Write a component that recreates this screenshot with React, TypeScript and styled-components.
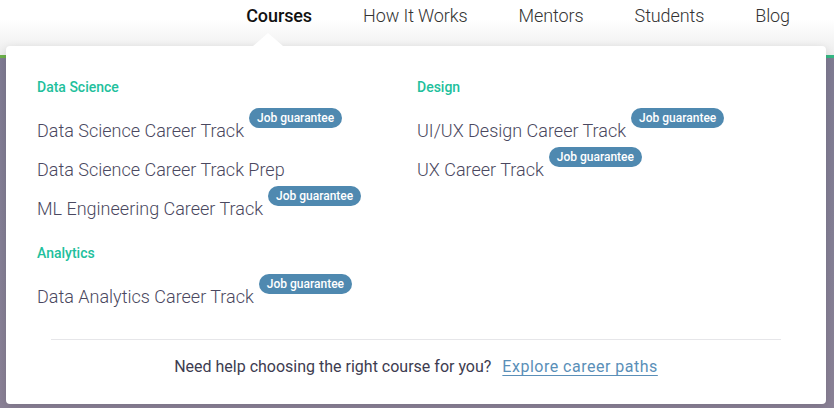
import React from 'react';
import styled, { createGlobalStyle } from 'styled-components';

const GlobalStyle = createGlobalStyle`
    html, body {
        margin: 0;
        padding: 0;
    }
    body {
        font-family: Roboto, "Liberation Sans", sans-serif;
        -webkit-font-smoothing: antialiased;
    }
`;

const StyledPage = styled.div`
    background: linear-gradient(180deg, #7e7a92 0%, #847f95 60%, #8a8196 100%);
    height: 408px;
    overflow: hidden;
    position: relative;
    width: 834px;
`;

const StyledHeader = styled.header`
    background: linear-gradient(180deg, #ffffff 0px, #ffffff 20px, #ededed 55px);
    box-sizing: border-box;
    display: flex;
    gap: 51px;
    height: 55px;
    justify-content: flex-end;
    padding-right: 44px;
`;

const StyledNavItem = styled.a<{ $active?: boolean }>`
    color: ${props => props.$active ? '#111111' : '#333333'};
    font-size: 18px;
    font-weight: ${props => props.$active ? 500 : 300};
    letter-spacing: -0.1px;
    line-height: 32px;
    text-decoration: none;
`;

const StyledStripe = styled.div`
    background: linear-gradient(90deg, #6cb04a 0%, #4fb56a 60%, #35b884 100%);
    height: 3px;
`;

const StyledDropdown = styled.div`
    background: #ffffff;
    border-radius: 4px;
    box-shadow: 0 2px 10px rgba(0, 0, 0, 0.12);
    box-sizing: border-box;
    height: 358px;
    left: 6px;
    padding: 31px 31px 0 31px;
    position: absolute;
    top: 46px;
    width: 820px;

    &::before {
        border-bottom: 13px solid #ffffff;
        border-left: 15px solid transparent;
        border-right: 15px solid transparent;
        content: '';
        left: 247px;
        position: absolute;
        top: -13px;
    }
`;

const StyledColumns = styled.div`
    display: grid;
    grid-template-columns: 380px 1fr;
`;

const StyledColumn = styled.div`
    display: flex;
    flex-direction: column;
`;

const StyledGroupTitle = styled.h4<{ $spaced?: boolean }>`
    color: #22bf9c;
    font-size: 14px;
    font-weight: 500;
    line-height: 20px;
    margin: ${props => props.$spaced ? '15px' : '0'} 0 14px 0;
`;

const StyledCourse = styled.a`
    align-items: flex-start;
    color: #4a4860;
    display: flex;
    font-size: 18px;
    font-weight: 300;
    height: 39px;
    line-height: 39px;
    text-decoration: none;
`;

const StyledBadge = styled.span`
    background: #4f89b0;
    border-radius: 10px;
    color: #ffffff;
    font-size: 12px;
    font-weight: 500;
    height: 20px;
    line-height: 20px;
    margin: -3px 0 0 5px;
    padding: 0 8px;
    white-space: nowrap;
`;

const StyledDivider = styled.hr`
    border: none;
    border-top: 1px solid #e6e6e9;
    margin: 23px 14px 0 14px;
`;

const StyledFooter = styled.p`
    color: #3d3c50;
    font-size: 16px;
    line-height: 20px;
    margin: 17px 0 0 0;
    text-align: center;
`;

const StyledLink = styled.a`
    color: #5a8fb8;
    letter-spacing: 0.5px;
    margin-left: 11px;
    text-decoration: underline;
    text-underline-offset: 3px;
`;

type Course = {
    title: string,
    guarantee?: boolean
};

type Group = {
    name: string,
    courses: Course[]
};

const LEFT_GROUPS: Group[] = [
    {
        name: 'Data Science',
        courses: [
            { title: 'Data Science Career Track', guarantee: true },
            { title: 'Data Science Career Track Prep' },
            { title: 'ML Engineering Career Track', guarantee: true },
        ]
    },
    {
        name: 'Analytics',
        courses: [
            { title: 'Data Analytics Career Track', guarantee: true },
        ]
    }
];

const RIGHT_GROUPS: Group[] = [
    {
        name: 'Design',
        courses: [
            { title: 'UI/UX Design Career Track', guarantee: true },
            { title: 'UX Career Track', guarantee: true },
        ]
    }
];

const NAV = ['Courses', 'How It Works', 'Mentors', 'Students', 'Blog'];

function CourseColumn({ groups }: { groups: Group[] }) {
    return <StyledColumn>
        {groups.map((group, i) =>
            <React.Fragment key={group.name}>
                <StyledGroupTitle $spaced={i > 0}>{group.name}</StyledGroupTitle>
                {group.courses.map(course =>
                    <StyledCourse key={course.title} href="#">
                        {course.title}
                        {course.guarantee && <StyledBadge>Job guarantee</StyledBadge>}
                    </StyledCourse>
                )}
            </React.Fragment>
        )}
    </StyledColumn>
}

export default function App() {
    return <>
        <GlobalStyle />
        <StyledPage>
            <StyledHeader>
                {NAV.map(item =>
                    <StyledNavItem key={item} href="#" $active={item === 'Courses'}>{item}</StyledNavItem>
                )}
            </StyledHeader>
            <StyledStripe />

            <StyledDropdown>
                <StyledColumns>
                    <CourseColumn groups={LEFT_GROUPS} />
                    <CourseColumn groups={RIGHT_GROUPS} />
                </StyledColumns>
                <StyledDivider />
                <StyledFooter>
                    Need help choosing the right course for you?
                    <StyledLink href="#">Explore career paths</StyledLink>
                </StyledFooter>
            </StyledDropdown>
        </StyledPage>
    </>
}
